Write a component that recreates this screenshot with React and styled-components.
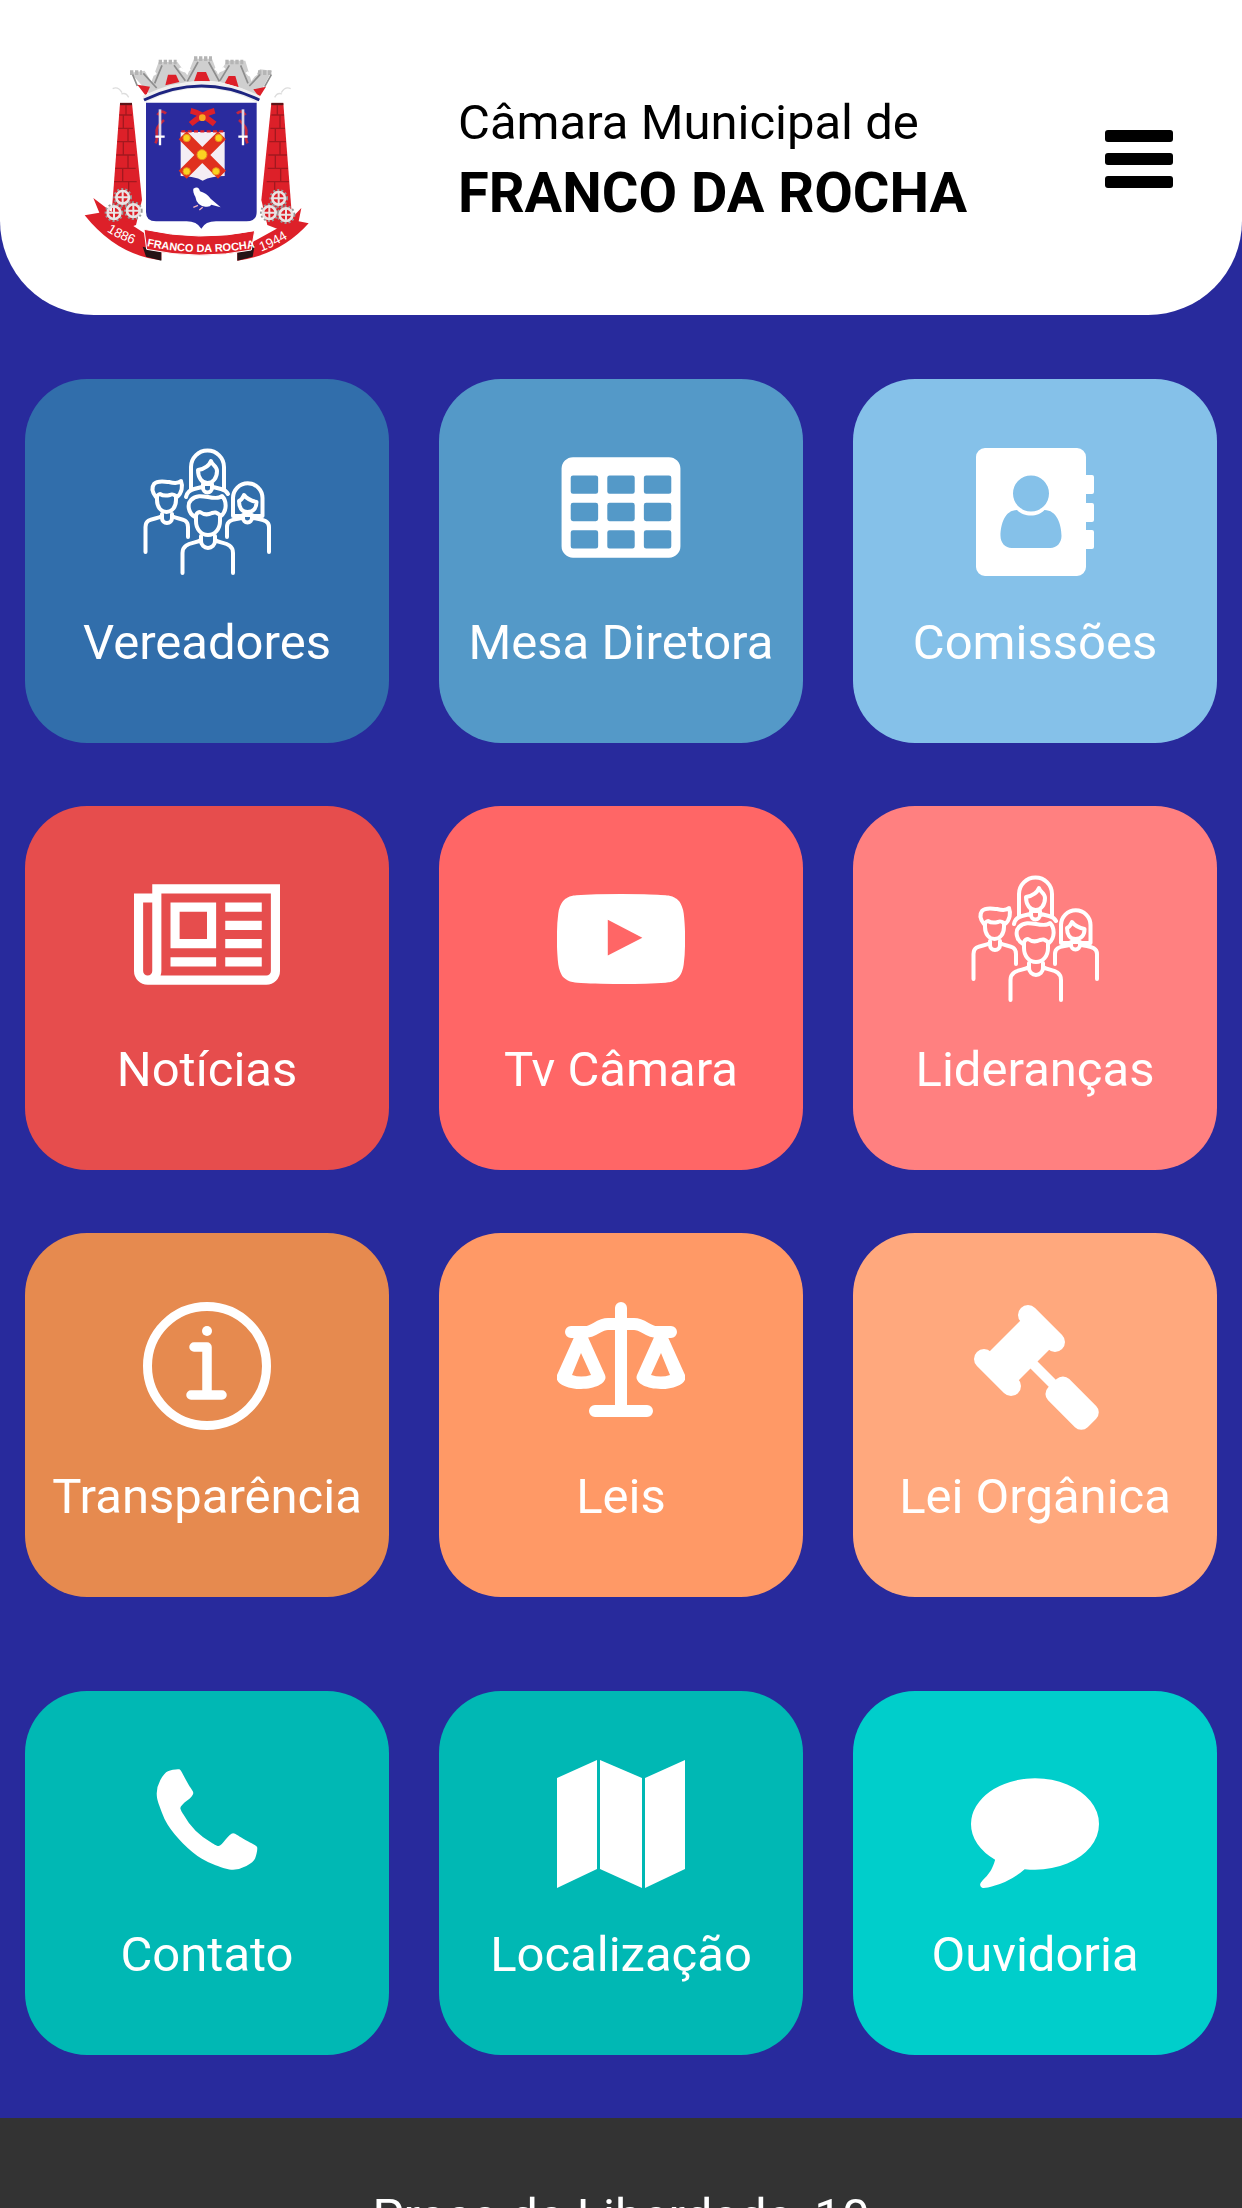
import React from 'react';
import styled, { createGlobalStyle } from 'styled-components';

const GlobalStyle = createGlobalStyle`
  * {
    box-sizing: border-box;
  }

  body {
    margin: 0;
    background: #282a9c;
    font-family: Roboto, 'Liberation Sans', sans-serif;
  }
`;

const Header = styled.header`
  display: grid;
  grid-template-columns: 1fr 2fr;
  align-items: start;
  padding: 40px 0 35px;
  background: #fff;
  border-radius: 0 0 94px 94px;
`;

const CrestLink = styled.a`
  display: flex;
  justify-content: center;

  svg {
    width: 280px;
    height: 240px;
  }
`;

const Brand = styled.div`
  display: flex;
  justify-content: space-between;
  padding: 47px 69px 0 44px;
`;

const Title = styled.h1`
  margin: 0;
  color: #000;
  font-size: 49px;
  font-weight: 400;
  line-height: 71px;

  strong {
    display: block;
    font-size: 56px;
    font-weight: 700;
  }
`;

const MenuButton = styled.button`
  display: flex;
  flex-direction: column;
  justify-content: space-between;
  width: 68px;
  height: 58px;
  margin-top: 43px;
  padding: 0;
  border: 0;
  background: none;

  span {
    height: 12px;
    border-radius: 3px;
    background: #000;
  }
`;

const Menu = styled.main`
  display: flex;
  flex-direction: column;
  gap: 94px;
  padding: 64px 25px 63px;
`;

const TileGrid = styled.nav`
  display: grid;
  grid-template-columns: repeat(3, 1fr);
  gap: 63px 50px;
`;

const Tile = styled.a`
  display: flex;
  flex-direction: column;
  align-items: center;
  aspect-ratio: 1;
  padding-top: 69px;
  border-radius: 62px;
  background: ${({ $color }) => $color};
  color: #fff;
  text-decoration: none;

  svg {
    height: 128px;
  }
`;

const Label = styled.span`
  margin-top: 37px;
  font-size: 49px;
  line-height: 60px;
  white-space: nowrap;
`;

const Footer = styled.footer`
  padding: 69px 25px 64px;
  background: #333;
  color: #fff;
  font-size: 49px;
  line-height: 60px;
  text-align: center;
`;

const Icon = ({ width = 128, viewBox = '0 0 128 128', children }) => (
  <svg width={width} viewBox={viewBox} fill="currentColor" aria-hidden="true">
    {children}
  </svg>
);

const PeopleIcon = () => (
  <Icon>
    <g
      fill="none"
      stroke="currentColor"
      strokeWidth="4"
      strokeLinecap="round"
      strokeLinejoin="round"
    >
      {/* woman at the back */}
      <path d="M48 41V19a16.500 16.500 0 0 1 33 0V41" />
      <path d="M55 22c6-1 11-4 13-9 1 4 6 5 6 10 0 7-4 12-9.500 12S55 30 55 22z" />
      <path d="M60 36v4a4.500 4.500 0 0 0 9 0v-4zM43 49c1-5 4-7 8-8l8-2M70 39l8 2c4 1 6 3 7 5" />
      {/* man on the left */}
      <path d="M13 49c-4-5-5-9-2-13 4-4 10-2 15-2 4 1 9 2 12-1 2 5 1 12-4 16" />
      <path d="M14 48v4c0 7 4 12 9.500 12S33 59 33 52v-4c-3-2-4-2-6-1-4 1-7 1-10-1-1 0-2 1-3 2z" />
      <path d="M19 66v4a5 5 0 0 0 10 0v-4M19 68c-5 4-16.500 1-16.500 11v25M29 68c5 4 16 1 16 11v10" />
      {/* woman on the right */}
      <path d="M90 68V50a14.500 14.500 0 0 1 29.500 0V68M90 68h9M110 68h9" />
      <path d="M96 53c3-1 4-4 5-6 3 4 8 6 12.500 7 0 6-3 10-9 10s-8.500-5-8.500-11z" />
      <path d="M100 67v3a4.500 4.500 0 0 0 9 0v-3zM98 70c-6 2-14 1-14 9v10M111 70c6 2 15 1 15 9v25" />
      {/* man at the front */}
      <path d="M52 69c-7-4-8-13-4-17 5-5 11-4 17-3 5 1 11 2 14-1 5 5 5 15-1 20" />
      <path d="M53 67v6c0 8 5 14 12 14s12-6 12-14v-6c-4-3-5-3-8-2-4 2-8 2-12-1-2 0-3 1-4 3z" />
      <path d="M58 88v5a7 7 0 0 0 14 0v-5M58 92c-6 4-18.500 2-18.500 13v20M72 92c6 4 18 2 18 13v20" />
    </g>
  </Icon>
);

const TableIcon = () => (
  <Icon viewBox="0 0 1792 1792">
    <path
      fillRule="evenodd"
      d="M224 128h1344a160 160 0 0 1 160 160v1088a160 160 0 0 1-160 160H224a160 160 0 0 1-160-160V288a160 160 0 0 1 160-160z
      M224 384h320q32 0 32 32v192q0 32-32 32h-320q-32 0-32-32v-192q0-32 32-32z
      m512 0h320q32 0 32 32v192q0 32-32 32h-320q-32 0-32-32v-192q0-32 32-32z
      m512 0h320q32 0 32 32v192q0 32-32 32h-320q-32 0-32-32v-192q0-32 32-32z
      M224 768h320q32 0 32 32v192q0 32-32 32h-320q-32 0-32-32v-192q0-32 32-32z
      m512 0h320q32 0 32 32v192q0 32-32 32h-320q-32 0-32-32v-192q0-32 32-32z
      m512 0h320q32 0 32 32v192q0 32-32 32h-320q-32 0-32-32v-192q0-32 32-32z
      M224 1152h320q32 0 32 32v192q0 32-32 32h-320q-32 0-32-32v-192q0-32 32-32z
      m512 0h320q32 0 32 32v192q0 32-32 32h-320q-32 0-32-32v-192q0-32 32-32z
      m512 0h320q32 0 32 32v192q0 32-32 32h-320q-32 0-32-32v-192q0-32 32-32z"
    />
  </Icon>
);

const AddressBookIcon = () => (
  <Icon>
    <path
      fillRule="evenodd"
      d="M14 0h92a9 9 0 0 1 9 9v18h6q2 0 2 2v15q0 2-2 2h-6v9h6q2 0 2 2v15q0 2-2 2h-6v8h6q2 0 2 2v15q0 2-2 2h-6v18a9 9 0 0 1-9 9H14a9 9 0 0 1-9-9V9a9 9 0 0 1 9-9z
      M60 27.500a18 18 0 1 0 0 36 18 18 0 1 0 0-36z
      M46 62C34 62 29.500 76 29.500 88c0 7 5 12 11 12h39c6 0 11-5 11-12 0-12-5-26-17-26-4 4-8 5.500-13.500 5.500S50 66 46 62z"
    />
  </Icon>
);

const NewspaperIcon = () => (
  <Icon width={146} viewBox="0 0 2048 1792">
    <path d="M1024 512h-384v384h384v-384zm128 640v128h-640v-128h640zm0-768v640h-640v-640h640zm640 768v128h-512v-128h512zm0-256v128h-512v-128h512zm0-256v128h-512v-128h512zm0-256v128h-512v-128h512zm-1536 960v-960h-128v960q0 26 19 45t45 19 45-19 19-45zm1664 0v-1088h-1536v1088q0 33-11 64h1483q26 0 45-19t19-45zm128-1216v1216q0 80-56 136t-136 56h-1664q-80 0-136-56t-56-136v-1088h256v-128h1792z" />
  </Icon>
);

const PlayIcon = () => (
  <Icon viewBox="0 0 1792 1792">
    <path d="M711 1128l484-250-484-253v503zm185-862q168 0 324.500 4.500t229.500 9.500l73 4q1 0 17 1.500t23 3 23.500 4.500 28.500 8 28 13 31 19.500 29 26.500q6 6 15.500 18.500t29 58.500 26.500 101q8 64 12.500 136.500t5.500 113.500v176q1 145-18 290-7 55-25 99.500t-32 61.500l-14 17q-14 15-29 26.500t-31 19-28 12.500-28.500 8-24 4.500-23 3-16.500 1.500q-251 19-627 19-207-2-359.500-6.500t-200.500-7.500l-49-4-36-4q-36-5-54.500-10t-51-21-56.500-41q-6-6-15.500-18.500t-29-58.500-26.500-101q-8-64-12.500-136.500t-5.500-113.500v-176q-1-145 18-290 7-55 25-99.500t32-61.500l14-17q14-15 29-26.500t31-19.500 28-13 28.500-8 23.500-4.500 23-3 17-1.500q251-18 627-18z" />
  </Icon>
);

const InfoIcon = () => (
  <Icon>
    <circle cx="64" cy="64" r="59.500" fill="none" stroke="currentColor" strokeWidth="9" />
    <circle cx="64" cy="29" r="5" />
    <path
      d="M51 45h13v48M48 93h31"
      fill="none"
      stroke="currentColor"
      strokeWidth="9.500"
      strokeLinecap="round"
      strokeLinejoin="round"
    />
  </Icon>
);

const ScaleIcon = () => (
  <Icon>
    <g fill="none" stroke="currentColor" strokeWidth="12" strokeLinecap="round">
      <path d="M64 6v100M38 109h52" />
      <path d="M14 30h14c10 0 13-8 23-8h26c10 0 13 8 23 8h14" />
    </g>
    <path
      fillRule="evenodd"
      d="M18 33h12l18 40c3 7-8 14-24 14S-3 80 0 73zM24 51l-9 22q9 3 19 0z
      M98 33h12l18 40c3 7-8 14-24 14s-27-7-24-14zM104 51l-10 22q10 3 19 0z"
    />
  </Icon>
);

const GavelIcon = () => (
  <Icon>
    <path
      d="M57 13l27 27M13 57l27 27"
      stroke="currentColor"
      strokeWidth="20"
      strokeLinecap="round"
    />
    <path d="M50 18l29 29-32 32-29-29z" />
    <path d="M58 58l28 28" stroke="currentColor" strokeWidth="10" />
    <rect x="115" y="-15" width="56" height="30" rx="9" transform="rotate(45)" />
  </Icon>
);

const PhoneIcon = () => (
  <Icon viewBox="0 0 1792 1792">
    <path d="M1600 1240q0 27-10 70.500t-21 68.500q-21 50-122 106-94 51-186 51-27 0-53-3.500t-57.500-12.500-47-14.500-55.500-20.500-49-18q-98-35-175-83-127-79-264-216t-216-264q-48-77-83-175-3-9-18-49t-20.500-55.500-14.500-47-12.500-57.500-3.500-53q0-92 51-186 56-101 106-122 25-11 68.500-21t70.500-10q14 0 21 3 18 6 53 76 11 19 30 54t35 63.500 31 53.500q3 4 17.500 25t21.500 35.500 7 28.500q0 20-28.500 50t-62 55-62 53-28.500 46q0 9 5 22.500t8.500 20.500 14 24 11.500 19q76 137 174 235t235 174q2 1 19 11.500t24 14 20.500 8.500 22.500 5q18 0 46-28.500t53-62 55-62 50-28.500q14 0 28.500 7t35.500 21.500 25 17.500q25 15 53.500 31t63.500 35 54 30q70 35 76 53 3 7 3 21z" />
  </Icon>
);

const MapIcon = () => (
  <Icon>
    <path d="M0 18L40 0v109L0 128zM43 0l42 18v110l-42-19zM88 18l40-18v109l-40 19z" />
  </Icon>
);

const CommentIcon = () => (
  <Icon viewBox="0 0 1792 1792">
    <path d="M1792 896q0 174-120 321.500t-326 233-450 85.500q-70 0-145-8-198 175-460 242-49 14-114 22-17 2-30.500-9t-17.500-29v-1q-3-4-.5-12t2-10 4.500-9.500l6-9 7-8.500 8-9q7-8 31-34.500t34.500-38 31-39.500 32.500-51 27-59 26-76q-157-89-247.500-220t-90.500-281q0-130 71-248.500t191-204.500 286-136.500 348-50.500q244 0 450 85.500t326 233 120 321.500z" />
  </Icon>
);

const Gear = ({ x, y }) => (
  <g transform={`translate(${x} ${y})`} fill="none" stroke="#e9e4e4">
    <circle r="24" stroke="#999" strokeWidth="8" strokeDasharray="6 6" />
    <circle r="19" strokeWidth="8" />
    <path d="M-18 0h36M0-18v36" strokeWidth="6" />
  </g>
);

const Tower = ({ x, flip }) => (
  <g transform={`translate(${x} 0) scale(${flip ? -1 : 1} 1)`}>
    <path d="M-18 190h36l30 395-78-30-18-75z" fill="#dd2029" />
    <path d="M-18 192h36" stroke="#5e1418" strokeWidth="7" />
    <path
      d="M-18 225h38M-21 265h44M-24 305h50M-27 345h56M-29 385h61M-32 425h67M0 195v30M8 225v40M-6 265v40M8 305v40M-6 345v40M10 385v40M-8 425v40"
      stroke="#a3181f"
      strokeWidth="4"
      fill="none"
    />
    <path d="M-8 172q8-16 22-10M12 158q12-20 28-12" stroke="#ddd" strokeWidth="4" fill="none" />
  </g>
);

const Sword = ({ x, flip }) => (
  <g transform={`translate(${x} 0) scale(${flip ? -1 : 1} 1)`} fill="none">
    <path d="M-8 225q14-18 26-4M12 240q-26 22-22 40t-4 30" stroke="#c2273f" strokeWidth="8" />
    <path d="M0 208v82" stroke="#d9d5e6" strokeWidth="8" />
    <path d="M-14 290h28M0 290v26" stroke="#fff" strokeWidth="7" />
  </g>
);

const Crest = () => (
  <svg viewBox="-9 0 840 720" role="img" aria-label="Brasão de Franco da Rocha">
    {/* mural crown */}
    <path
      d="M182 98l42-6 20 34 22-60 56 0 30 40 20-50 54 0 18 48 28-42 54 0 18 62 26-36 36 4-42 78q-160-96-318 0z"
      fill="#cfcfcf"
    />
    <path
      d="M180 98h36M266 66h54M372 56h54M466 66h54M564 98h44"
      stroke="#b5b5b5"
      strokeWidth="14"
      strokeDasharray="10 5"
    />
    <path
      d="M202 138l-14-34M220 100l40 44M276 76l-22 54M312 76l34 46M384 66l-32 58M416 66l32 58M478 76l-28 46M512 76l22 54M570 104l-32 34M604 104l-20 36"
      stroke="#8d8d8d"
      strokeWidth="5"
    />
    <path
      d="M232 92q8 18 26 6M330 84q10 16 30 2M436 84q12 16 28 0M530 96q12 18 30 4"
      stroke="#fff"
      strokeWidth="9"
      fill="none"
    />
    <path d="M202 134l38 6-12 28zM286 136l8-32h24l10 22zM372 124l10-28h26l12 28zM464 130l12-22h20l10 34zM550 148l38-8-20 32z" fill="#dd2029" />
    <path d="M222 178q172-88 344 0" fill="none" stroke="#efefef" strokeWidth="22" />
    <path d="M222 180q172-84 346 0" fill="none" stroke="#1d2480" strokeWidth="9" />

    <Tower x={168} flip />
    <Tower x={622} />

    {/* shield */}
    <path
      d="M228 188h332v328q0 28-30 28h-92q-32 0-44 22-14-22-44-22h-92q-30 0-30-28z"
      fill="#2a2b9e"
    />
    <Sword x={270} />
    <Sword x={519} flip />
    <path d="M362 212q34 8 72 40M434 212q-38 10-72 40" stroke="#dd2029" strokeWidth="17" />
    <circle cx="397" cy="233" r="10" fill="#f7a823" />
    <path d="M332 276h132v132q-40 0-66 14-26-14-66-14z" fill="#f4eef4" />
    <path d="M334 274h128" stroke="#dd2029" strokeWidth="7" strokeDasharray="12 7" />
    <path d="M338 286l118 118M456 286L338 404" stroke="#e0301e" strokeWidth="34" />
    <g fill="#fbd321" stroke="#e88f1a" strokeWidth="3">
      <circle cx="396" cy="344" r="15" />
      <circle cx="350" cy="294" r="11" />
      <circle cx="446" cy="294" r="11" />
      <circle cx="350" cy="394" r="11" />
      <circle cx="438" cy="394" r="11" />
    </g>
    <path d="M370 446q16-10 20 8 20 6 32 22l30 26-28-8q-4 8-18 6-26-4-30-30-8-14-6-24z" fill="#fff" />
    <path d="M384 496l-14 6M398 502l-10 8" stroke="#f3b5bd" strokeWidth="4" />

    {/* ribbon */}
    <path d="M70 474l52 40 120 78 32 30v38q-132-12-230-134l44-8z" fill="#dd2029" />
    <path d="M218 620l56 14v28l-46-12z" fill="#251416" />
    <path d="M694 504l-44 46-106 58-42 26v28q130-18 214-112l-30-6z" fill="#dd2029" />
    <path d="M502 632l52-16-6 34-46 12z" fill="#251416" />
    <path d="M222 568q166 38 332 4l-10 58q-156 32-314-2z" fill="#dd2029" stroke="#fff" strokeWidth="3" />
    <Gear x={158} y={472} />
    <Gear x={132} y={518} />
    <Gear x={190} y={512} />
    <Gear x={626} y={475} />
    <Gear x={598} y={518} />
    <Gear x={648} y={524} />
    <path id="ribbon-left" d="M110 574q46 30 120 52" fill="none" />
    <path id="ribbon-center" d="M230 618q162 36 350 0" fill="none" />
    <path id="ribbon-right" d="M574 634q56-20 120-66" fill="none" />
    <g fill="#fff" fontFamily="Liberation Sans, sans-serif">
      <text fontSize="40">
        <textPath href="#ribbon-left">1886</textPath>
      </text>
      <text fontSize="33" fontWeight="700">
        <textPath href="#ribbon-center">FRANCO DA ROCHA</textPath>
      </text>
      <text fontSize="40">
        <textPath href="#ribbon-right">1944</textPath>
      </text>
    </g>
  </svg>
);

const institutional = [
  { label: 'Vereadores', color: '#316eab', icon: PeopleIcon },
  { label: 'Mesa Diretora', color: '#5499c8', icon: TableIcon },
  { label: 'Comissões', color: '#85c1e9', icon: AddressBookIcon },
  { label: 'Notícias', color: '#e64d4d', icon: NewspaperIcon },
  { label: 'Tv Câmara', color: '#ff6666', icon: PlayIcon },
  { label: 'Lideranças', color: '#ff8080', icon: PeopleIcon },
  { label: 'Transparência', color: '#e68a4f', icon: InfoIcon },
  { label: 'Leis', color: '#ff9966', icon: ScaleIcon },
  { label: 'Lei Orgânica', color: '#ffa87d', icon: GavelIcon },
];

const contact = [
  { label: 'Contato', color: '#00b8b4', icon: PhoneIcon },
  { label: 'Localização', color: '#00b8b4', icon: MapIcon },
  { label: 'Ouvidoria', color: '#00cecb', icon: CommentIcon },
];

const Tiles = ({ items, name }) => (
  <TileGrid aria-label={name}>
    {items.map(({ label, color, icon: TileIcon }) => (
      <Tile href="#" $color={color} key={label}>
        <TileIcon />
        <Label>{label}</Label>
      </Tile>
    ))}
  </TileGrid>
);

const App = () => {
  return (
    <>
      <GlobalStyle />
      <Header>
        <CrestLink href="#">
          <Crest />
        </CrestLink>
        <Brand>
          <Title>
            Câmara Municipal de
            <strong>FRANCO DA ROCHA</strong>
          </Title>
          <MenuButton type="button" aria-label="Menu">
            <span />
            <span />
            <span />
          </MenuButton>
        </Brand>
      </Header>
      <Menu>
        <Tiles items={institutional} name="Institucional" />
        <Tiles items={contact} name="Atendimento" />
      </Menu>
      <Footer>Praça da Liberdade, 10</Footer>
    </>
  );
};

export default App;
